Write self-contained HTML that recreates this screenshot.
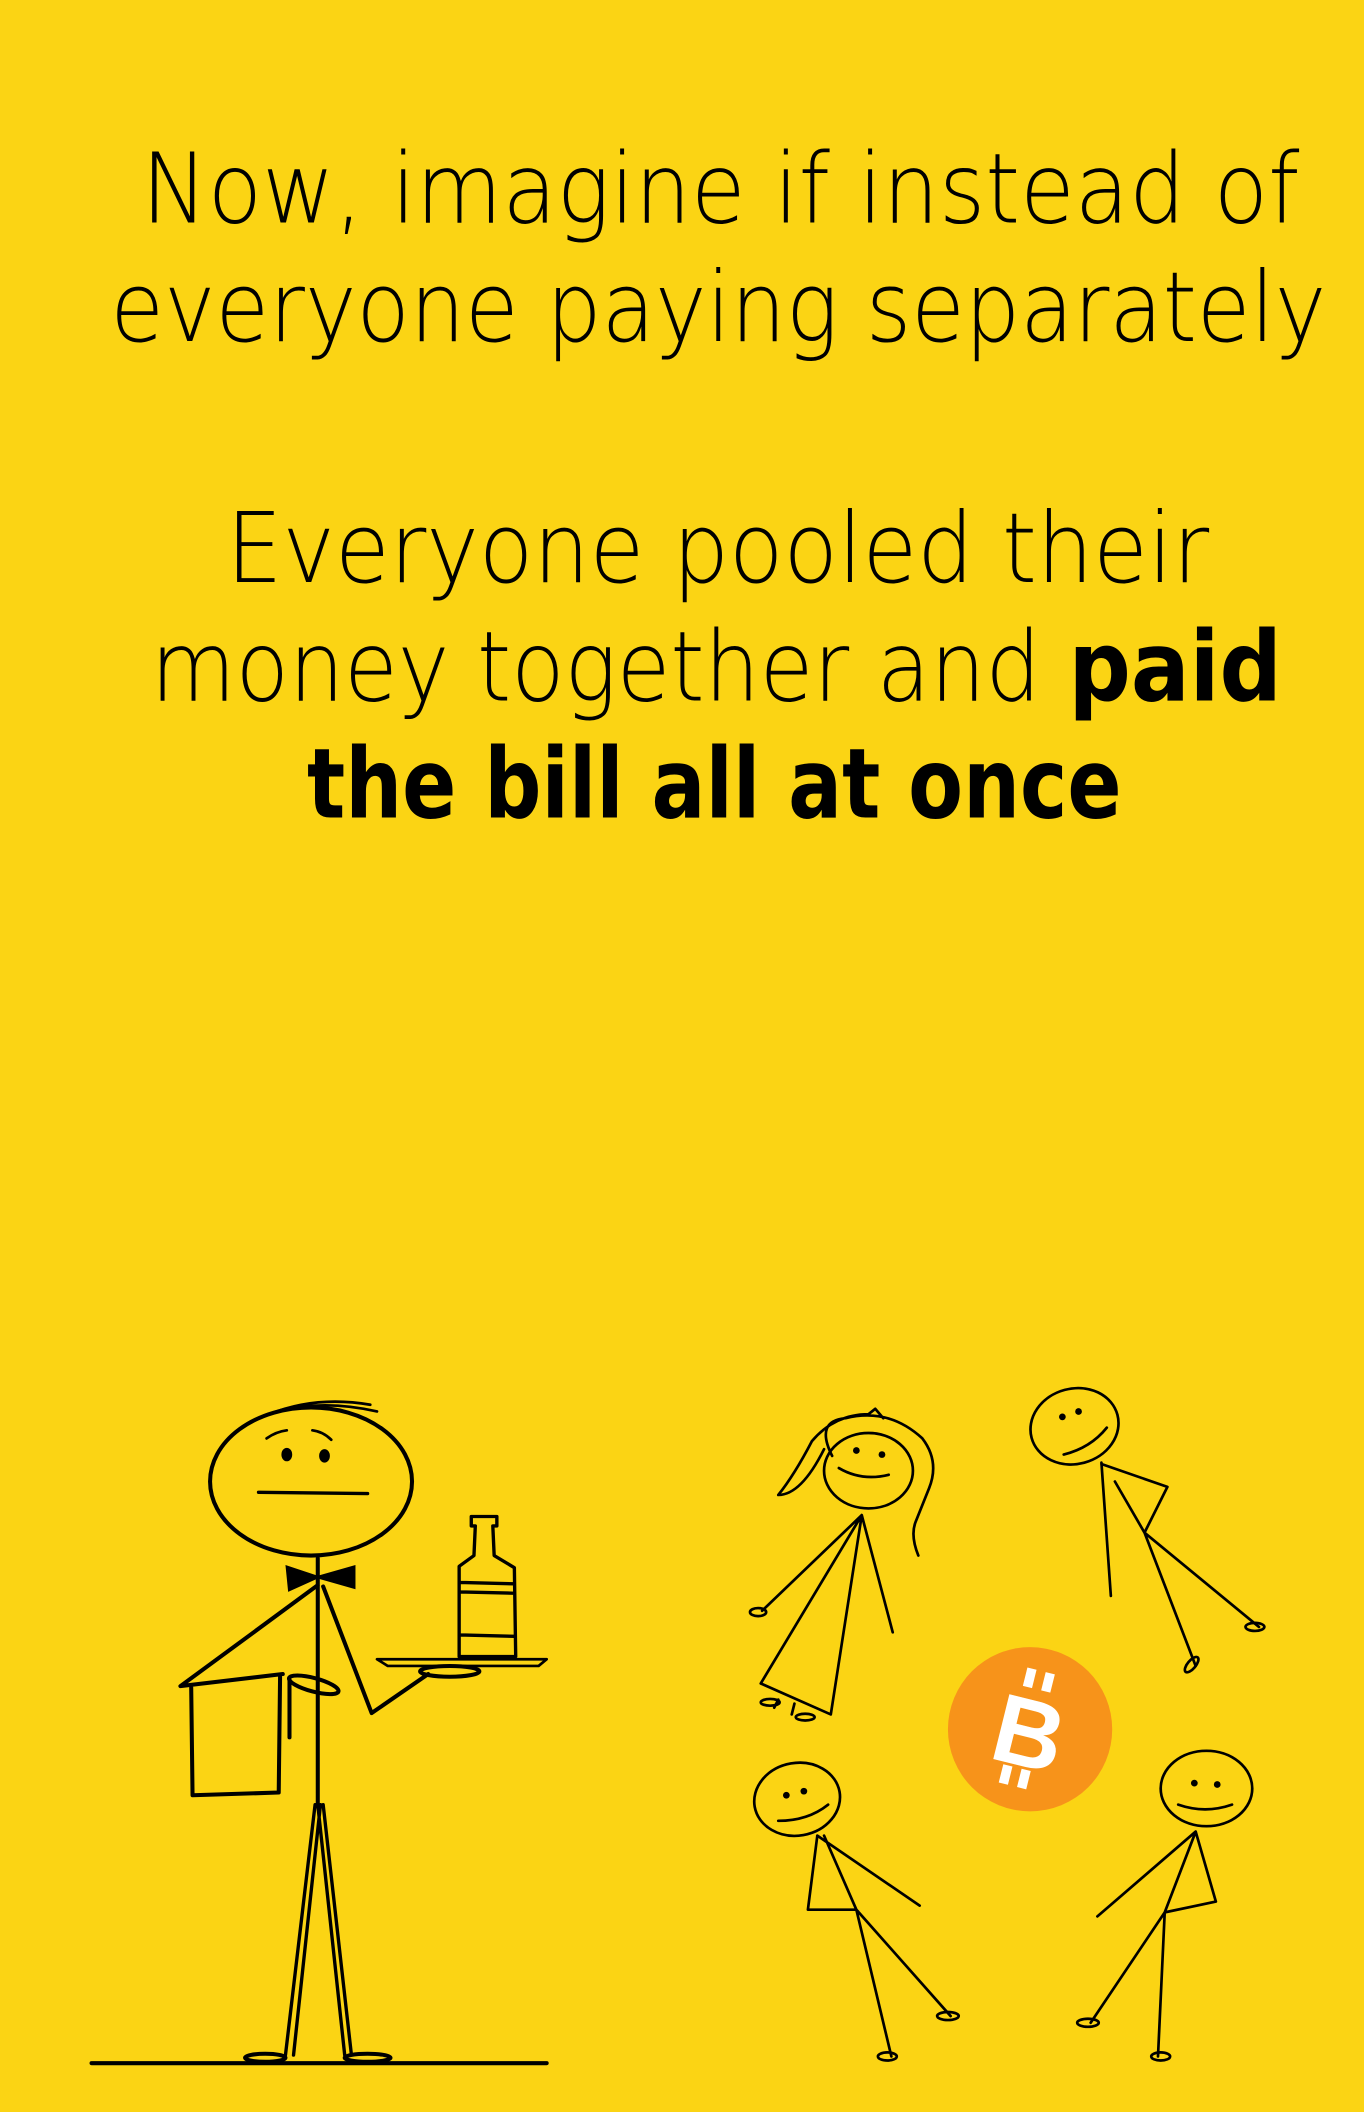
<!DOCTYPE html>
<html><head><meta charset="utf-8"><style>
html,body{margin:0;padding:0;background:#FBD414;}
svg{display:block}
.t{font-family:"DejaVu Sans","Liberation Sans",sans-serif;font-weight:200;font-size:72px;fill:#000}
.b{font-family:"DejaVu Sans","Liberation Sans",sans-serif;font-weight:700}
</style></head><body>
<svg width="1364" height="2112" viewBox="0 0 1013 1568" xmlns="http://www.w3.org/2000/svg">
<rect width="1013" height="1568" fill="#FBD414"/>
<text class="t" x="105" y="165" textLength="860" lengthAdjust="spacingAndGlyphs">Now, imagine if instead of</text>
<text class="t" x="82" y="253" textLength="903" lengthAdjust="spacingAndGlyphs">everyone paying separately</text>
<text class="t" x="168" y="432" textLength="730" lengthAdjust="spacingAndGlyphs">Everyone pooled their</text>
<text class="t" x="112" y="520" textLength="840" lengthAdjust="spacingAndGlyphs">money together and <tspan class="b">paid</tspan></text>
<text class="t b" x="228" y="607" textLength="605" lengthAdjust="spacingAndGlyphs">the bill all at once</text>

<g fill="none" stroke="#000" stroke-width="3" stroke-linecap="round" stroke-linejoin="round">
 <!-- waiter -->
 <ellipse cx="231" cy="1100" rx="75" ry="55"/>
 <path d="M200 1050 Q235 1036 275 1043 M215 1046 Q245 1040 280 1048 M198 1068 Q205 1063 213 1062 M232 1062 Q240 1063 246 1069" stroke-width="2"/>
 <path d="M192 1108 L273 1109" stroke-width="2.5"/>
 <path d="M236 1157 L236 1340 M236 1177 L134 1252 L210 1243 M142 1253 L143 1333 L207 1331 L208 1245 M215 1247 L215 1290 M240 1178 L276 1272 L318 1243"/>
 <path d="M234 1340 L212 1526 M238 1340 L218 1526 M236 1340 L256 1526 M240 1340 L261 1526" stroke-width="2.5"/>
 <ellipse cx="197" cy="1528" rx="15" ry="3"/><ellipse cx="273" cy="1528" rx="17" ry="3"/>
 <path d="M68 1532 L406 1532" stroke-width="3"/>
 <ellipse cx="233" cy="1251" rx="19" ry="5" transform="rotate(15 233 1251)"/>
 <path d="M280 1232 L406 1232 L400 1237 L288 1237 Z" stroke-width="2"/>
 <ellipse cx="334" cy="1241" rx="22" ry="4"/>
 <path d="M341 1230 L341 1163 L352 1155 L353 1133 L350 1133 L350 1126 L369 1126 L369 1133 L366 1133 L367 1155 L382 1164 L383 1230 Z M342 1175 L382 1176 M342 1182 L382 1183 M342 1214 L382 1215" stroke-width="2.5"/>
 <!-- people -->
 <g stroke-width="2">
  <!-- girl -->
  <ellipse cx="645" cy="1092" rx="33" ry="28"/>
  <path d="M618 1081 Q605 1055 628 1053 Q660 1045 685 1068 Q698 1085 690 1105 L680 1130 Q676 1140 682 1155 M612 1076 Q595 1110 578 1110 Q590 1095 603 1070 Q620 1050 645 1050 M645 1050 L650 1046 L656 1053"/>
  <path d="M640 1125 L566 1196 M640 1125 L663 1212 M640 1125 L565 1250 L617 1273 L640 1125 M578 1262 L575 1268 M590 1265 L588 1273"/>
  <ellipse cx="563" cy="1197" rx="6" ry="3"/><ellipse cx="572" cy="1264" rx="7" ry="2.5"/><ellipse cx="598" cy="1275" rx="7" ry="2.5"/>
  <path d="M623 1090 Q640 1100 660 1095"/>
  <!-- top right -->
  <ellipse cx="798" cy="1059" rx="33" ry="28" transform="rotate(-15 798 1059)"/>
  <path d="M790 1080 Q810 1075 822 1060 M818 1086 L825 1185 M818 1087 L867 1104 L850 1138 M828 1100 L850 1138 L888 1237 M850 1138 L935 1208"/>
  <ellipse cx="932" cy="1208" rx="7" ry="3"/><ellipse cx="885" cy="1236" rx="7" ry="3" transform="rotate(-50 885 1236)"/>
  <!-- bottom left -->
  <ellipse cx="592" cy="1336" rx="32" ry="27" transform="rotate(-10 592 1336)"/>
  <path d="M578 1352 Q600 1352 615 1340 M607 1363 L600 1418 L636 1418 M607 1363 L683 1415 M612 1363 L636 1418 L662 1527 M636 1418 L706 1497"/>
  <ellipse cx="704" cy="1497" rx="8" ry="3"/><ellipse cx="659" cy="1527" rx="7" ry="3"/>
  <!-- bottom right -->
  <ellipse cx="896" cy="1328" rx="34" ry="28"/>
  <path d="M875 1340 Q895 1347 915 1340 M888 1360 L865 1420 L903 1412 L888 1360 M888 1360 L815 1423 M865 1420 L860 1527 M865 1420 L810 1502"/>
  <ellipse cx="808" cy="1502" rx="8" ry="3"/><ellipse cx="862" cy="1527" rx="7" ry="3"/>
 </g>
</g>
<g fill="#000">
 <ellipse cx="213" cy="1080" rx="4" ry="5"/><ellipse cx="241" cy="1081" rx="4" ry="5"/>
 <path d="M212 1162 L236 1170 L264 1162 L264 1180 L236 1172 L214 1182 Z"/>
 <circle cx="636" cy="1077" r="2.5"/><circle cx="655" cy="1080" r="2.5"/>
 <circle cx="789" cy="1052" r="2.5"/><circle cx="801" cy="1048" r="2.5"/>
 <circle cx="584" cy="1333" r="2.5"/><circle cx="597" cy="1330" r="2.5"/>
 <circle cx="887" cy="1324" r="2.5"/><circle cx="904" cy="1325" r="2.5"/>
</g>
<circle cx="765" cy="1284" r="61" fill="#F7931A"/>
<g transform="rotate(14 765 1284)" fill="#fff">
 <rect x="752" y="1240" width="7" height="14"/><rect x="766" y="1240" width="7" height="14"/>
 <rect x="752" y="1314" width="7" height="14"/><rect x="766" y="1314" width="7" height="14"/>
 <text x="765" y="1312" font-family="Liberation Sans,sans-serif" font-weight="700" font-size="72" text-anchor="middle">B</text>
</g>
</svg>
</body></html>
